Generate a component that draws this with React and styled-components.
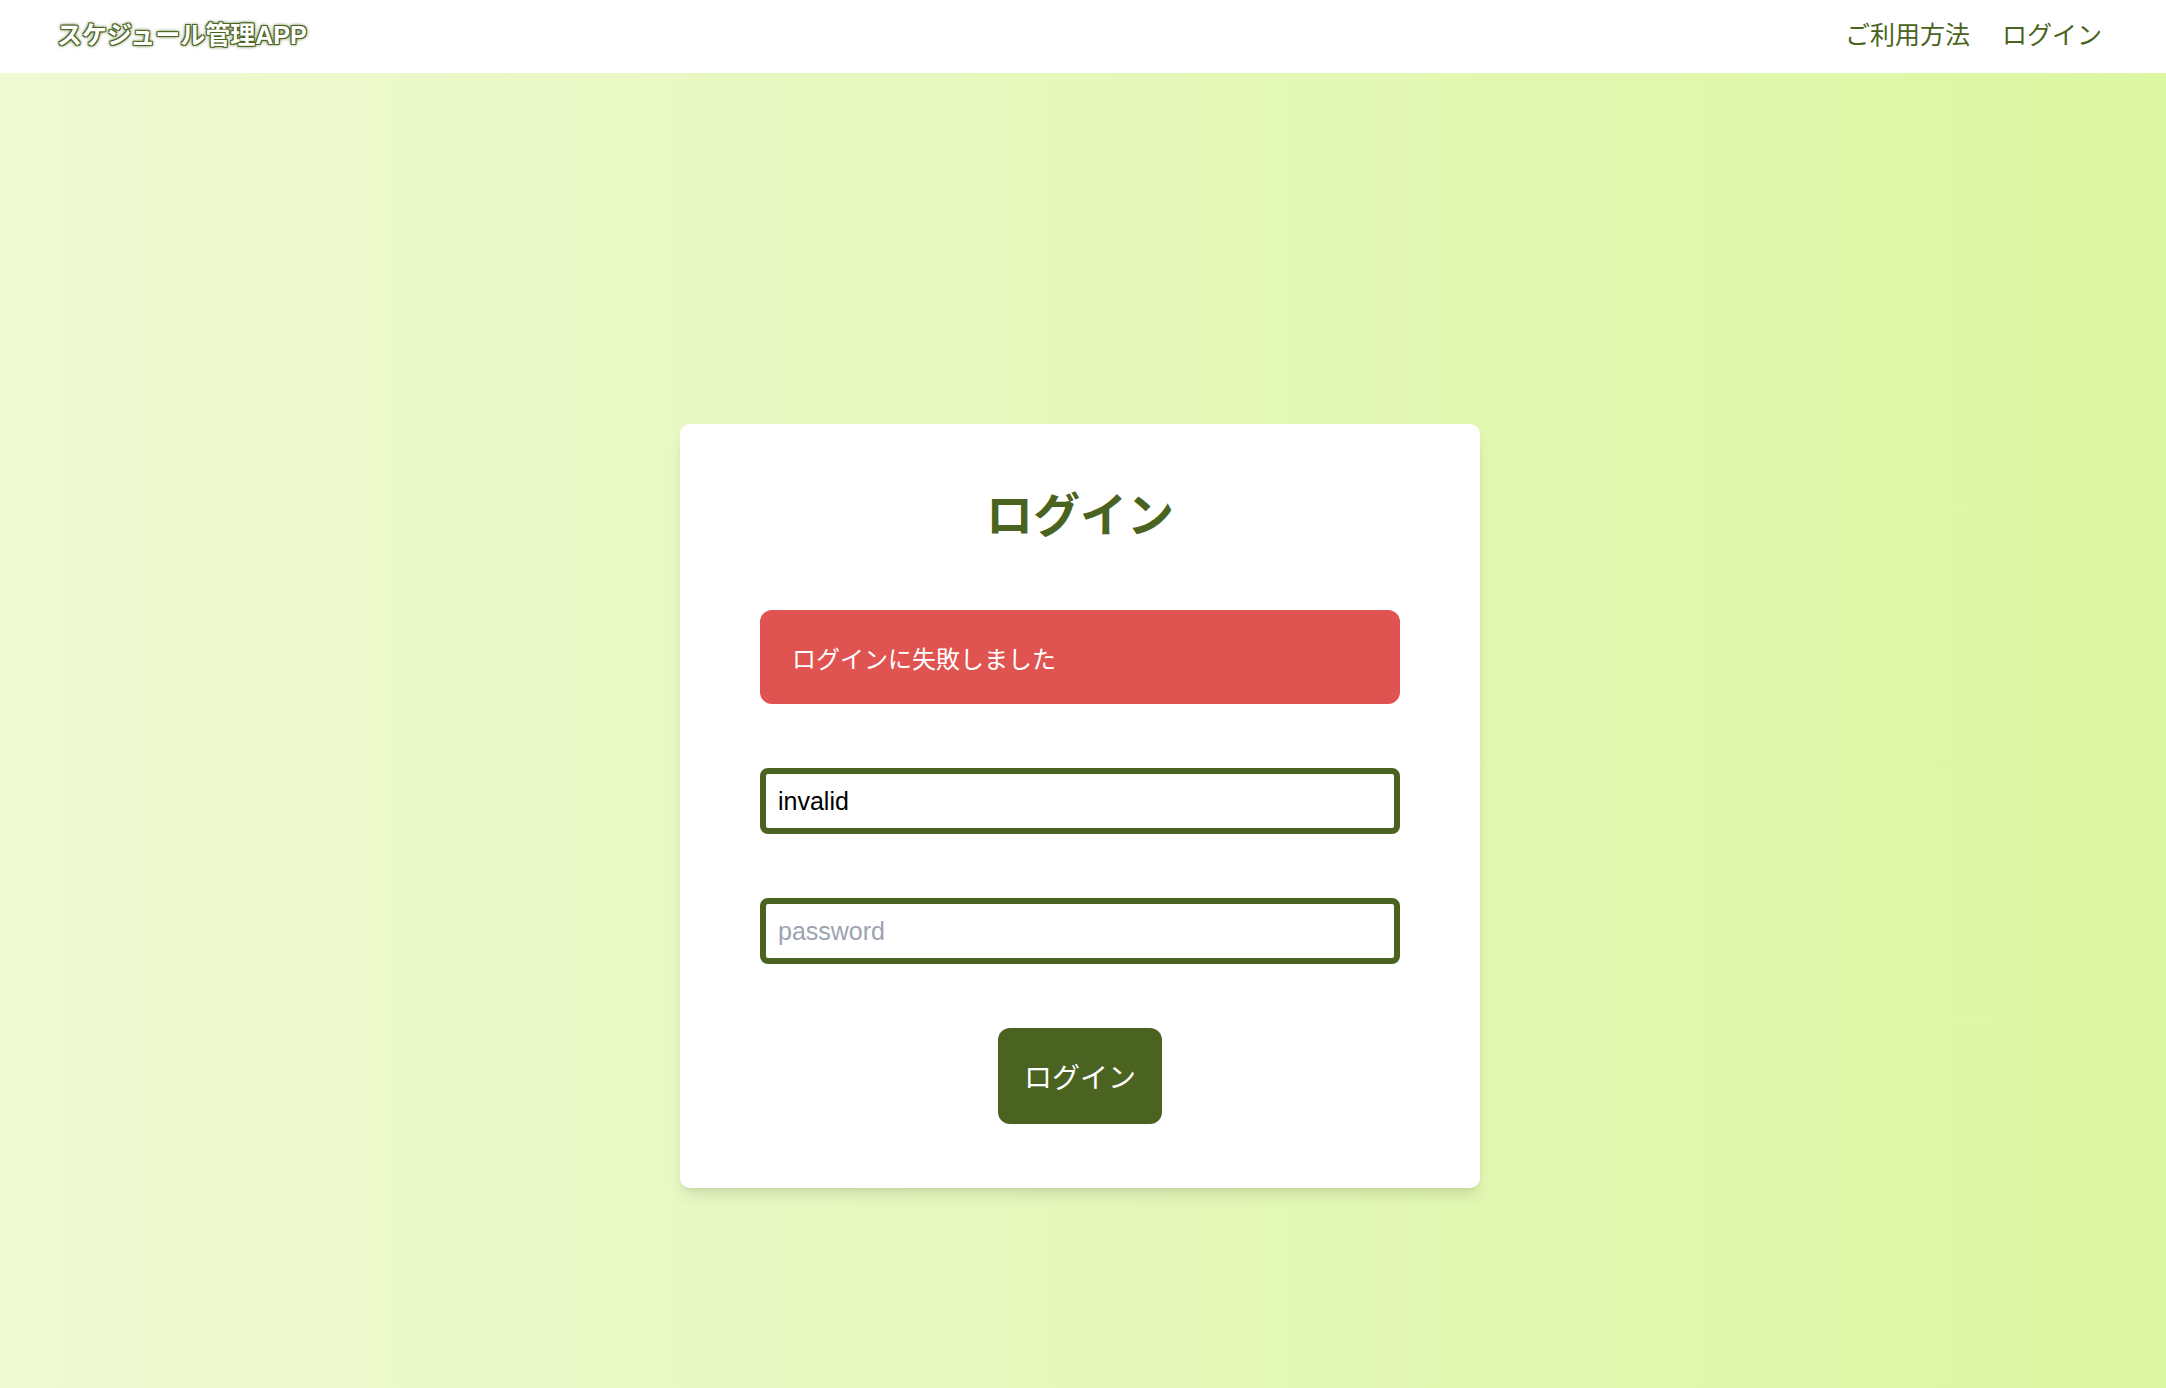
import React, { useState } from 'react';
import styled, { createGlobalStyle } from 'styled-components';

const GlobalStyle = createGlobalStyle`
    * {
        box-sizing: border-box;
    }
    body {
        margin: 0;
        font-family: 'Liberation Sans', 'Noto Sans CJK JP', sans-serif;
    }
`

const Page = styled.div`
    min-height: 100vh;
    display: flex;
    flex-direction: column;
    background: linear-gradient(to right, #eff9d3, #dcf7a2);
`

const Header = styled.header`
    height: 73px;
    background: #ffffff;
    display: flex;
    align-items: center;
    justify-content: space-between;
    padding: 0 64px 8px 57px;
`

const Logo = styled.div`
    font-size: 25px;
    font-weight: 700;
    color: #ffffff;
    text-shadow:
        -1px -1px 0 #4a6320,
        1px -1px 0 #4a6320,
        -1px 1px 0 #4a6320,
        1px 1px 0 #4a6320,
        0 0 3px #4a6320,
        0 0 4px #4a6320;
`

const Nav = styled.nav`
    display: flex;
    gap: 32px;
`

const NavLink = styled.a`
    font-size: 25px;
    color: #4a6320;
    text-decoration: none;
`

const Main = styled.main`
    flex: 1;
    display: flex;
    justify-content: center;
    align-items: flex-start;
    padding: 351px 6px 0 0;
`

const Card = styled.div`
    width: 800px;
    background: #ffffff;
    border-radius: 10px;
    padding: 56px 80px 64px;
    box-shadow: 0 10px 15px -3px rgba(0, 0, 0, 0.1), 0 4px 6px -4px rgba(0, 0, 0, 0.1);
`

const Title = styled.h1`
    margin: 0 0 58px;
    text-align: center;
    font-size: 47px;
    line-height: 72px;
    font-weight: 700;
    color: #4a6320;
`

const Form = styled.form`
    display: flex;
    flex-direction: column;
    gap: 64px;
`

const ErrorBox = styled.div`
    height: 94px;
    display: flex;
    align-items: center;
    padding: 0 32px;
    background: #df5350;
    border-radius: 12px;
    color: #ffffff;
    font-size: 24px;
`

const Input = styled.input`
    width: 100%;
    height: 66px;
    border: 6px solid #4a6320;
    border-radius: 8px;
    padding: 0 12px;
    font-family: 'Liberation Sans', 'Noto Sans CJK JP', sans-serif;
    font-size: 25px;
    color: #000000;
    outline: none;
    &::placeholder {
        color: #9ca3af;
    }
`

const SubmitButton = styled.button`
    align-self: center;
    height: 96px;
    padding: 0 26px;
    border: none;
    border-radius: 12px;
    background: #4a6320;
    color: #ffffff;
    font-family: 'Liberation Sans', 'Noto Sans CJK JP', sans-serif;
    font-size: 28px;
    cursor: pointer;
`

function App() {
    const [email, setEmail] = useState('invalid');
    const [password, setPassword] = useState('');

    return (
        <Page>
            <GlobalStyle />
            <Header>
                <Logo>スケジュール管理APP</Logo>
                <Nav>
                    <NavLink href="#">ご利用方法</NavLink>
                    <NavLink href="#">ログイン</NavLink>
                </Nav>
            </Header>
            <Main>
                <Card>
                    <Title>ログイン</Title>
                    <Form onSubmit={e => e.preventDefault()}>
                        <ErrorBox>ログインに失敗しました</ErrorBox>
                        <Input value={email} onChange={e => setEmail(e.target.value)} placeholder="email" />
                        <Input type="password" value={password} onChange={e => setPassword(e.target.value)} placeholder="password" />
                        <SubmitButton type="submit">ログイン</SubmitButton>
                    </Form>
                </Card>
            </Main>
        </Page>
    );
}

export default App
